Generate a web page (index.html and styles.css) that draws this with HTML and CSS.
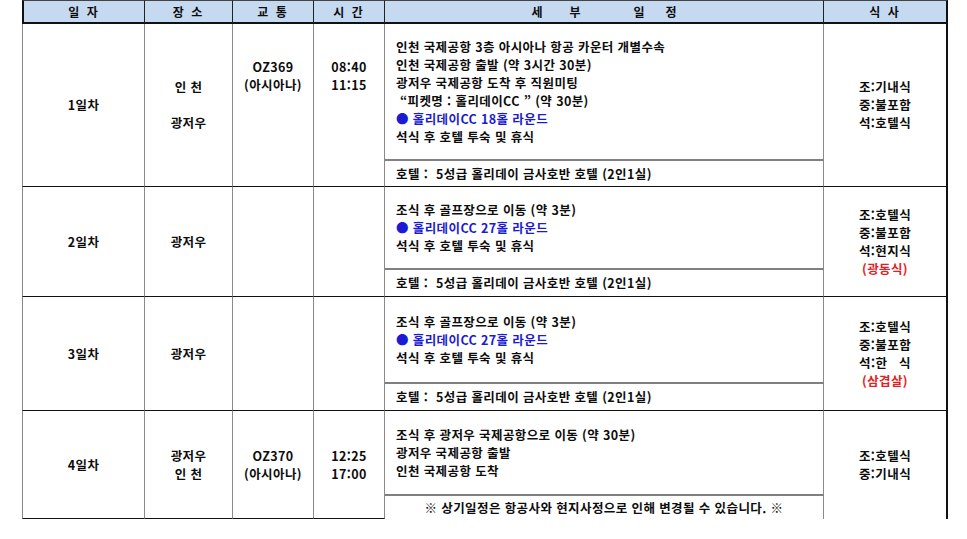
FILE: index.html
```html
<!DOCTYPE html>
<html lang="ko">
<head>
<meta charset="utf-8">
<title>일정표</title>
<link rel="stylesheet" href="styles.css">
</head>
<body>
<table class="itin">
  <colgroup>
    <col class="c-day"><col class="c-place"><col class="c-trans"><col class="c-time"><col class="c-detail"><col class="c-meal">
  </colgroup>
  <thead>
    <tr class="r-head">
      <th class="first">일 자</th>
      <th>장 소</th>
      <th>교 통</th>
      <th>시 간</th>
      <th><span class="hw">세</span><span class="hw g1">부</span><span class="hw g2">일</span><span class="hw g3">정</span></th>
      <th class="last">식 사</th>
    </tr>
  </thead>
  <tbody>
    <tr class="r-d1">
      <td class="first" rowspan="2">1일차</td>
      <td rowspan="2">인 천<br><br>광저우</td>
      <td rowspan="2" class="top">OZ369<br>(아시아나)</td>
      <td rowspan="2" class="top">08:40<br>11:15</td>
      <td class="detail">인천 국제공항 3층 아시아나 항공 카운터 개별수속<br>인천 국제공항 출발 (약 3시간 30분)<br>광저우 국제공항 도착 후 직원미팅<br>&nbsp;“피켓명 : 홀리데이CC ” (약 30분)<br><span class="blue">● 홀리데이CC 18홀 라운드</span><br>석식 후 호텔 투숙 및 휴식</td>
      <td class="last meal" rowspan="2">조:기내식<br>중:불포함<br>석:호텔식</td>
    </tr>
    <tr class="r-h1">
      <td class="hotel">호텔 :&nbsp; 5성급 홀리데이 금사호반 호텔 (2인1실)</td>
    </tr>
    <tr class="r-d2">
      <td class="first" rowspan="2">2일차</td>
      <td rowspan="2">광저우</td>
      <td rowspan="2"></td>
      <td rowspan="2"></td>
      <td class="detail">조식 후 골프장으로 이동 (약 3분)<br><span class="blue">● 홀리데이CC 27홀 라운드</span><br>석식 후 호텔 투숙 및 휴식</td>
      <td class="last meal" rowspan="2">조:호텔식<br>중:불포함<br>석:현지식<br><span class="red">(광동식)</span></td>
    </tr>
    <tr class="r-h2">
      <td class="hotel">호텔 :&nbsp; 5성급 홀리데이 금사호반 호텔 (2인1실)</td>
    </tr>
    <tr class="r-d3">
      <td class="first" rowspan="2">3일차</td>
      <td rowspan="2">광저우</td>
      <td rowspan="2"></td>
      <td rowspan="2"></td>
      <td class="detail">조식 후 골프장으로 이동 (약 3분)<br><span class="blue">● 홀리데이CC 27홀 라운드</span><br>석식 후 호텔 투숙 및 휴식</td>
      <td class="last meal" rowspan="2">조:호텔식<br>중:불포함<br><span class="pre">석:한   식</span><br><span class="red">(삼겹살)</span></td>
    </tr>
    <tr class="r-h3">
      <td class="hotel">호텔 :&nbsp; 5성급 홀리데이 금사호반 호텔 (2인1실)</td>
    </tr>
    <tr class="r-d4">
      <td class="first" rowspan="2">4일차</td>
      <td rowspan="2">광저우<br>인 천</td>
      <td rowspan="2">OZ370<br>(아시아나)</td>
      <td rowspan="2">12:25<br>17:00</td>
      <td class="detail">조식 후 광저우 국제공항으로 이동 (약 30분)<br>광저우 국제공항 출발<br>인천 국제공항 도착</td>
      <td class="last meal open" rowspan="2">조:호텔식<br>중:기내식</td>
    </tr>
    <tr class="r-h4">
      <td class="hotel note open">※ 상기일정은 항공사와 현지사정으로 인해 변경될 수 있습니다. ※</td>
    </tr>
  </tbody>
</table>
</body>
</html>
```

FILE: styles.css
```css
html, body {
  margin: 0;
  padding: 0;
  background: #ffffff;
}

body {
  font-family: "Noto Sans CJK KR", "Noto Sans", sans-serif;
  font-weight: 700;
  font-size: 12.5px;
  color: #0d0d0d;
}

.itin {
  margin-left: 22px;
  border-collapse: separate;
  border-spacing: 0;
  table-layout: fixed;
  width: 926px;
}

.c-day { width: 123px; }
.c-place { width: 88px; }
.c-trans { width: 81px; }
.c-time { width: 71px; }
.c-detail { width: 439px; }
.c-meal { width: 124px; }

.itin th,
.itin td {
  padding: 0;
  line-height: 18px;
  text-align: center;
  vertical-align: middle;
  box-sizing: border-box;
}

.itin th {
  background: #c5d9f1;
  font-weight: 700;
  font-size: 12px;
  letter-spacing: 2px;
  border-top: 1px solid #444444;
  border-right: 1px solid #222222;
  border-bottom: 2px solid #111111;
  height: 24px;
}

.itin th.first { border-left: 2px solid #111111; }
.itin th.last { border-right: 2px solid #111111; }

.hw { display: inline-block; letter-spacing: 0; }
.g1 { margin-left: 27px; }
.g2 { margin-left: 53px; }
.g3 { margin-left: 21px; }

.itin td {
  letter-spacing: 0.4px;
  border-right: 1px solid #8a8a8a;
  border-bottom: 1px solid #111111;
}

.itin td.first { border-left: 1px solid #8a8a8a; }
.itin td.last { border-right: 2px solid #111111; }

.itin td.top {
  vertical-align: top;
  padding-top: 34px;
}

.itin td.detail {
  text-align: left;
  padding-left: 11px;
  border-bottom: 2px solid #808080;
}

.itin td.hotel {
  text-align: left;
  padding-left: 11px;
}

.itin td.note {
  text-align: center;
  padding-left: 0;
}

.itin td.open { border-bottom: none; }

.r-d1 { height: 137px; }
.r-h1 { height: 26px; }
.r-d2 { height: 83px; }
.r-h2 { height: 27px; }
.r-d3 { height: 87px; }
.r-h3 { height: 27px; }
.r-d4 { height: 85px; }
.r-h4 { height: 23px; }

.blue { color: #1b1bd3; }
.red { color: #e31e24; }
.pre { white-space: pre; }
```
